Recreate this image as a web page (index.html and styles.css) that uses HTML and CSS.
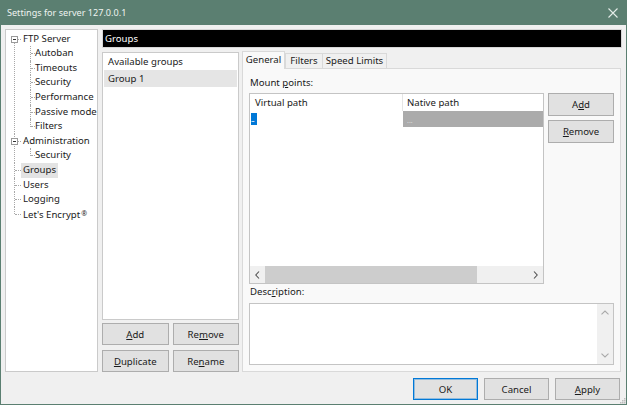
FILE: index.html
```html
<!DOCTYPE html>
<html>
<head>
<meta charset="utf-8">
<link rel="stylesheet" href="styles.css">
</head>
<body>
<div class="window">
  <div class="titlebar">
    <span class="title">Settings for server 127.0.0.1</span>
    <svg class="close" width="10" height="10" viewBox="0 0 10 10"><path d="M0.5 0.5L9.5 9.5M9.5 0.5L0.5 9.5" stroke="#e4ece8" stroke-width="1.1" fill="none"/></svg>
  </div>
  <div class="content">
    <div class="main">
      <div class="treebox">
        <ul class="tree">
          <li class="r"><div class="row"><span class="exp"></span><span class="lbl">FTP Server</span></div>
            <ul>
              <li class="c"><div class="row"><span class="lbl">Autoban</span></div></li>
              <li class="c"><div class="row"><span class="lbl">Timeouts</span></div></li>
              <li class="c"><div class="row"><span class="lbl">Security</span></div></li>
              <li class="c"><div class="row"><span class="lbl">Performance</span></div></li>
              <li class="c"><div class="row"><span class="lbl">Passive mode</span></div></li>
              <li class="c"><div class="row"><span class="lbl">Filters</span></div></li>
            </ul>
          </li>
          <li class="r"><div class="row"><span class="exp"></span><span class="lbl">Administration</span></div>
            <ul>
              <li class="c"><div class="row"><span class="lbl">Security</span></div></li>
            </ul>
          </li>
          <li class="r"><div class="row"><span class="lbl sel">Groups</span></div></li>
          <li class="r"><div class="row"><span class="lbl">Users</span></div></li>
          <li class="r"><div class="row"><span class="lbl">Logging</span></div></li>
          <li class="r"><div class="row"><span class="lbl">Let's Encrypt<span class="reg">®</span></span></div></li>
        </ul>
      </div>
      <div class="right">
        <div class="pagehead">Groups</div>
        <div class="pagebody">
          <div class="groupcol">
            <div class="glist">
              <div class="gitem">Available groups</div>
              <div class="gitem sel">Group 1</div>
            </div>
            <div class="gbtns">
              <button class="btn"><u>A</u>dd</button>
              <button class="btn">Re<u>m</u>ove</button>
              <button class="btn"><u>D</u>uplicate</button>
              <button class="btn">Re<u>n</u>ame</button>
            </div>
          </div>
          <div class="tabs">
            <div class="tabbar">
              <div class="tab active t1">General</div>
              <div class="tab t2">Filters</div>
              <div class="tab t3">Speed Limits</div>
            </div>
            <div class="tabpage">
              <div class="label">Mount <u>p</u>oints:</div>
              <div class="mountrow">
                <div class="table">
                  <div class="thead">
                    <div class="th c1">Virtual path</div>
                    <div class="th c2">Native path</div>
                  </div>
                  <div class="trow">
                    <div class="td c1"><span class="edit">...</span></div>
                    <div class="td c2 gray">...</div>
                  </div>
                  <div class="tfill"></div>
                  <div class="hscroll">
                    <div class="sbtn left"><svg width="5" height="8" viewBox="0 0 5 8"><path d="M4 0.5L0.8 4L4 7.5" stroke="#505050" stroke-width="1.1" fill="none"/></svg></div>
                    <div class="thumb"></div>
                    <div class="track"></div>
                    <div class="sbtn rightb"><svg width="5" height="8" viewBox="0 0 5 8"><path d="M1 0.5L4.2 4L1 7.5" stroke="#505050" stroke-width="1.1" fill="none"/></svg></div>
                  </div>
                </div>
                <div class="sidebtns">
                  <button class="btn side">A<u>d</u>d</button>
                  <button class="btn side"><u>R</u>emove</button>
                </div>
              </div>
              <div class="label">Desc<u>r</u>iption:</div>
              <div class="descbox">
                <div class="descarea"></div>
                <div class="vscroll">
                  <div class="vbtn"><svg width="8" height="5" viewBox="0 0 8 5"><path d="M0.5 4.3L4 1L7.5 4.3" stroke="#a8a8a8" stroke-width="1.1" fill="none"/></svg></div>
                  <div class="vbtn"><svg width="8" height="5" viewBox="0 0 8 5"><path d="M0.5 0.7L4 4L7.5 0.7" stroke="#a8a8a8" stroke-width="1.1" fill="none"/></svg></div>
                </div>
              </div>
            </div>
          </div>
        </div>
      </div>
    </div>
    <div class="footer">
      <button class="btn foot default">OK</button>
      <button class="btn foot">Cancel</button>
      <button class="btn foot"><u>A</u>pply</button>
    </div>
  </div>
  <svg class="grip" width="7" height="7" viewBox="0 0 7 7">
    <rect x="5" y="1" width="1.5" height="1.5" fill="#bdbdbd"/>
    <rect x="3" y="3" width="1.5" height="1.5" fill="#bdbdbd"/>
    <rect x="5" y="3" width="1.5" height="1.5" fill="#bdbdbd"/>
    <rect x="1" y="5" width="1.5" height="1.5" fill="#bdbdbd"/>
    <rect x="3" y="5" width="1.5" height="1.5" fill="#bdbdbd"/>
    <rect x="5" y="5" width="1.5" height="1.5" fill="#bdbdbd"/>
  </svg>
</div>
</body>
</html>
```

FILE: styles.css
```css
html, body {
  margin: 0;
  padding: 0;
}
body {
  font-family: "Noto Sans", "Open Sans", sans-serif;
  font-size: 9.6px;
  color: #1a1a1a;
  background: #f0f0f0;
}
.window {
  position: relative;
  width: 627px;
  height: 405px;
  box-sizing: border-box;
  border: 1px solid #5b7f71;
  border-top: 0;
  background: #f0f0f0;
  display: flex;
  flex-direction: column;
}
.titlebar {
  height: 25px;
  flex: none;
  background: #5b7f71;
  display: flex;
  align-items: center;
  justify-content: space-between;
  padding-left: 6px;
  color: #eef3f0;
  font-size: 9.1px;
}
.close {
  margin-right: 8px;
  margin-top: 1px;
}
.content {
  flex: 1;
  display: flex;
  flex-direction: column;
  padding: 4px;
  min-height: 0;
}
.main {
  flex: 1;
  display: flex;
  gap: 4px;
  min-height: 0;
}
.treebox {
  width: 93px;
  flex: none;
  box-sizing: border-box;
  background: #fff;
  border: 1px solid #cacaca;
  overflow: hidden;
}
.tree, .tree ul {
  list-style: none;
  margin: 0;
  padding: 0;
}
.tree {
  padding-top: 1.7px;
}
.tree li {
  position: relative;
}
.row {
  position: relative;
  height: 14.6px;
  line-height: 14.6px;
  white-space: nowrap;
  padding-left: 17px;
}
.c > .row {
  padding-left: 29px;
}
.r::before {
  content: "";
  position: absolute;
  left: 8px;
  top: 0;
  bottom: 0;
  border-left: 1px dotted #a8a8a8;
}
.r:first-child::before {
  top: 7.3px;
}
.r:last-child::before {
  bottom: auto;
  height: 7.3px;
}
.r > .row::after {
  content: "";
  position: absolute;
  left: 9px;
  width: 6px;
  top: 7px;
  border-top: 1px dotted #a8a8a8;
}
.c::before {
  content: "";
  position: absolute;
  left: 24px;
  top: 0;
  bottom: 0;
  border-left: 1px dotted #a8a8a8;
}
.c:last-child::before {
  bottom: auto;
  height: 7.3px;
}
.c > .row::after {
  content: "";
  position: absolute;
  left: 25px;
  width: 4px;
  top: 7px;
  border-top: 1px dotted #a8a8a8;
}
.exp {
  position: absolute;
  left: 5px;
  top: 4px;
  width: 7px;
  height: 7px;
  box-sizing: border-box;
  border: 1px solid #9a9a9a;
  background: #fff;
  z-index: 1;
}
.exp::after {
  content: "";
  position: absolute;
  left: 1px;
  top: 2px;
  width: 3px;
  height: 1px;
  background: #333;
}
.lbl {
  display: inline-block;
  height: 14.6px;
}
.lbl.sel {
  background: #e3e3e3;
  padding: 0 2px;
  margin-left: -2px;
}
.reg {
  font-size: 7px;
  vertical-align: 2px;
  margin-left: 1px;
}
.right {
  flex: 1;
  display: flex;
  flex-direction: column;
  gap: 4px;
  min-width: 0;
}
.pagehead {
  flex: none;
  height: 19px;
  box-sizing: border-box;
  border: 1px solid #d6d6d6;
  background: #000;
  color: #fff;
  padding-left: 2px;
  line-height: 17px;
}
.pagebody {
  flex: 1;
  display: flex;
  gap: 3px;
  padding-right: 1px;
  min-height: 0;
}
.groupcol {
  width: 137px;
  flex: none;
  display: flex;
  flex-direction: column;
  gap: 3px;
}
.glist {
  flex: 1;
  background: #fff;
  border: 1px solid #cacaca;
  padding: 0 1px;
}
.gitem {
  height: 17px;
  line-height: 17px;
  padding-left: 4px;
}
.gitem.sel {
  background: #e5e5e5;
}
.gbtns {
  display: grid;
  grid-template-columns: 1fr 1fr;
  column-gap: 4px;
  row-gap: 5px;
}
.btn {
  height: 22px;
  box-sizing: border-box;
  border: 1px solid #adadad;
  background: #e1e1e1;
  font: inherit;
  color: #1a1a1a;
  padding: 0;
  margin: 0;
}
.tabs {
  flex: 1;
  display: flex;
  flex-direction: column;
  min-width: 0;
}
.tabbar {
  flex: none;
  display: flex;
  align-items: flex-end;
  height: 17px;
  margin-bottom: -1px;
  position: relative;
  z-index: 1;
}
.tab {
  box-sizing: border-box;
  height: 15px;
  margin-bottom: 1px;
  border: 1px solid #d9d9d9;
  border-bottom: 0;
  background: #f0f0f0;
  text-align: center;
  line-height: 14px;
  white-space: nowrap;
}
.tab.active {
  height: 18px;
  margin-bottom: 0;
  background: #f9f9f9;
  line-height: 16px;
}
.t1 { width: 43px; }
.t2 { width: 38px; }
.t3 { width: 65px; margin-left: -1px; }
.tabpage {
  flex: 1;
  background: #f9f9f9;
  border: 1px solid #d9d9d9;
  display: flex;
  flex-direction: column;
  padding: 6px;
  min-height: 0;
}
.label {
  flex: none;
  height: 16px;
  line-height: 16px;
  padding-left: 1px;
}
.mountrow {
  flex: 1;
  display: flex;
  gap: 4px;
  margin-top: 2px;
  min-height: 0;
}
.table {
  flex: 1;
  display: flex;
  flex-direction: column;
  border: 1px solid #c4c4c4;
  background: #fff;
  min-width: 0;
}
.thead {
  flex: none;
  display: flex;
  height: 17px;
  line-height: 17px;
}
.th.c1 {
  width: 153px;
  box-sizing: border-box;
  border-right: 1px solid #e5e5e5;
  padding-left: 5px;
}
.th.c2 {
  flex: 1;
  padding-left: 4px;
}
.trow {
  flex: none;
  display: flex;
  height: 16px;
}
.td.c1 {
  width: 153px;
  padding-left: 1px;
  box-sizing: border-box;
}
.td.c2 {
  flex: 1;
}
.edit {
  display: block;
  margin-top: 2px;
  width: 6px;
  height: 12px;
  background: #0078d7;
  color: #fff;
  font-size: 7px;
  line-height: 14px;
  letter-spacing: -1px;
  overflow: hidden;
}
.gray {
  background: #ababab;
  color: #dadada;
  padding-left: 4px;
  font-size: 7px;
  line-height: 19px;
  overflow: hidden;
}
.tfill {
  flex: 1;
}
.hscroll {
  flex: none;
  height: 17px;
  display: flex;
  background: #f0f0f0;
}
.sbtn {
  display: flex;
  align-items: center;
  justify-content: center;
}
.sbtn.left { width: 15px; }
.sbtn.rightb { width: 16px; }
.thumb {
  width: 212px;
  background: #cdcdcd;
}
.track {
  flex: 1;
}
.sidebtns {
  width: 66px;
  flex: none;
  display: flex;
  flex-direction: column;
  gap: 4px;
}
.btn.side {
  height: 23px;
}
.descbox {
  flex: none;
  height: 62px;
  box-sizing: border-box;
  margin-top: 3px;
  border: 1px solid #c4c4c4;
  background: #fff;
  display: flex;
}
.descarea {
  flex: 1;
}
.vscroll {
  width: 16px;
  background: #f0f0f0;
  display: flex;
  flex-direction: column;
  justify-content: space-between;
}
.vbtn {
  height: 17px;
  display: flex;
  align-items: center;
  justify-content: center;
}
.footer {
  flex: none;
  display: flex;
  justify-content: flex-end;
  gap: 6px;
  margin-top: 6px;
  padding-right: 2px;
}
.btn.foot {
  width: 65px;
}
.btn.default {
  border-color: #0078d7;
  box-shadow: inset 0 0 0 1px rgba(0, 120, 215, 0.35);
}
.grip {
  position: absolute;
  right: 0;
  bottom: 0;
}
```
